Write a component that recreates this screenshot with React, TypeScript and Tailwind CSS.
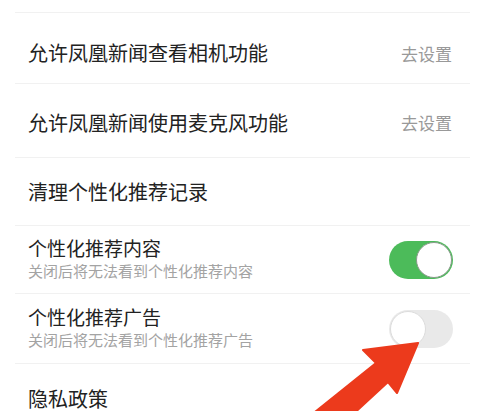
import React from 'react'

function Toggle({ on }: { on: boolean }) {
  return (
    <div
      className={`relative w-[64px] h-[38px] rounded-full ${on ? 'bg-[#4cbb5a]' : 'bg-[#e9e9e9]'}`}
    >
      <div
        className={`absolute top-[1px] w-[36px] h-[36px] rounded-full bg-white border ${
          on ? 'right-[1px] border-[#8a9a8c]' : 'left-[1px] border-[#dcdcdc]'
        }`}
      />
    </div>
  )
}

function Sep() {
  return <div className="h-px bg-[#f1f1f1]" />
}

export default function App() {
  return (
    <div
      className="relative w-[491px] h-[411px] overflow-hidden bg-white text-[#222]"
      style={{ fontFamily: '"Noto Sans CJK SC", "Noto Sans", sans-serif' }}
    >
      <div className="pl-[15px] pr-[21px]">
        <div className="h-[12px]" />
        <Sep />
        {/* 相机 */}
        <div className="h-[70px] pt-[10px] pl-[13px] pr-[18px] flex items-center justify-between">
          <span className="text-[20px] leading-none">允许凤凰新闻查看相机功能</span>
          <span className="text-[17px] leading-none text-[#999]">去设置</span>
        </div>
        <Sep />
        {/* 麦克风 */}
        <div className="h-[73px] pt-[4px] pl-[13px] pr-[18px] flex items-center justify-between">
          <span className="text-[20px] leading-none">允许凤凰新闻使用麦克风功能</span>
          <span className="text-[17px] leading-none text-[#999]">去设置</span>
        </div>
        <Sep />
        <div className="h-[67px] pl-[13px] flex items-center">
          <span className="text-[20px] leading-none">清理个性化推荐记录</span>
        </div>
        <Sep />
        {/* 推荐内容 */}
        <div className="h-[67px] pl-[13px] pr-[17px] flex items-center justify-between">
          <div className="flex flex-col -mt-[2px]">
            <span className="text-[19px] leading-[24px]">个性化推荐内容</span>
            <span className="text-[15px] leading-[22px] text-[#a3a3a3]">关闭后将无法看到个性化推荐内容</span>
          </div>
          <Toggle on />
        </div>
        <Sep />
        {/* 推荐广告 */}
        <div className="h-[69px] pl-[13px] pr-[17px] flex items-center justify-between">
          <div className="flex flex-col -mt-[2px]">
            <span className="text-[19px] leading-[24px]">个性化推荐广告</span>
            <span className="text-[15px] leading-[22px] text-[#a3a3a3]">关闭后将无法看到个性化推荐广告</span>
          </div>
          <Toggle on={false} />
        </div>
        <Sep />
        <div className="h-[70px] pl-[13px] flex items-center">
          <span className="text-[20px] leading-none">隐私政策</span>
        </div>
      </div>

      {/* red arrow */}
      <svg className="absolute inset-0 pointer-events-none" width="491" height="411" viewBox="0 0 491 411">
        <polygon
          points="418,343 363,350 376,363 300,424 336,430 388,382 397,393"
          fill="#ec3a1c"
          stroke="#ec3a1c"
          strokeLinejoin="round"
          strokeWidth="2"
        />
      </svg>
    </div>
  )
}
